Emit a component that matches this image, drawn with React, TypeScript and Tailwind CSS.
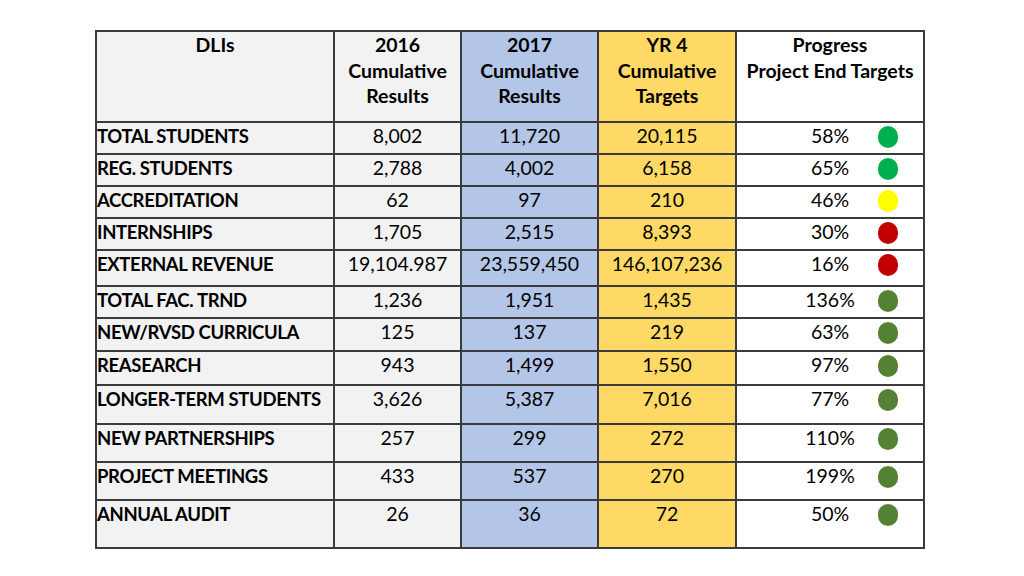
import React from "react";

type Row = {
  name: string;
  a: string;
  b: string;
  c: string;
  p: string;
  color: string;
  h: number;
};

const rows: Row[] = [
  { name: "TOTAL STUDENTS", a: "8,002", b: "11,720", c: "20,115", p: "58%", color: "#00b050", h: 32 },
  { name: "REG. STUDENTS", a: "2,788", b: "4,002", c: "6,158", p: "65%", color: "#00b050", h: 32 },
  { name: "ACCREDITATION", a: "62", b: "97", c: "210", p: "46%", color: "#ffff00", h: 32 },
  { name: "INTERNSHIPS", a: "1,705", b: "2,515", c: "8,393", p: "30%", color: "#c00000", h: 32 },
  { name: "EXTERNAL REVENUE", a: "19,104.987", b: "23,559,450", c: "146,107,236", p: "16%", color: "#c00000", h: 36 },
  { name: "TOTAL FAC. TRND", a: "1,236", b: "1,951", c: "1,435", p: "136%", color: "#548235", h: 32 },
  { name: "NEW/RVSD CURRICULA", a: "125", b: "137", c: "219", p: "63%", color: "#548235", h: 33 },
  { name: "REASEARCH", a: "943", b: "1,499", c: "1,550", p: "97%", color: "#548235", h: 34 },
  { name: "LONGER-TERM STUDENTS", a: "3,626", b: "5,387", c: "7,016", p: "77%", color: "#548235", h: 39 },
  { name: "NEW PARTNERSHIPS", a: "257", b: "299", c: "272", p: "110%", color: "#548235", h: 38 },
  { name: "PROJECT MEETINGS", a: "433", b: "537", c: "270", p: "199%", color: "#548235", h: 38 },
  { name: "ANNUAL AUDIT", a: "26", b: "36", c: "72", p: "50%", color: "#548235", h: 48 },
];

export default function App() {
  return (
    <div
      className="w-[1024px] h-[576px] bg-white overflow-hidden pt-[30px] pl-[95px] text-black"
      style={{ fontFamily: "Lato, 'Open Sans', sans-serif" }}
    >
      <table className="border-collapse table-fixed w-[828px] text-[19.5px] leading-[24px]">
        <colgroup>
          <col className="w-[238px]" />
          <col className="w-[127px]" />
          <col className="w-[137px]" />
          <col className="w-[138px]" />
          <col className="w-[188px]" />
        </colgroup>
        <thead>
          <tr className="h-[91px] font-bold leading-[25.5px]">
            <th className="border-2 border-[#3b3b3b] bg-[#f2f2f2] align-top pt-0 font-bold">DLIs</th>
            <th className="border-2 border-[#3b3b3b] bg-[#f2f2f2] align-top pt-0 font-bold">
              2016
              <br />
              Cumulative
              <br />
              Results
            </th>
            <th className="border-2 border-[#3b3b3b] bg-[#b4c6e7] align-top pt-0 font-bold">
              2017
              <br />
              Cumulative
              <br />
              Results
            </th>
            <th className="border-2 border-[#3b3b3b] bg-[#ffd966] align-top pt-0 font-bold">
              YR 4
              <br />
              Cumulative
              <br />
              Targets
            </th>
            <th className="border-2 border-[#3b3b3b] bg-white align-top pt-0 font-bold">
              Progress
              <br />
              Project End Targets
            </th>
          </tr>
        </thead>
        <tbody>
          {rows.map((r) => (
            <tr key={r.name} style={{ height: r.h }}>
              <td className="border-2 border-[#3b3b3b] bg-[#f2f2f2] align-top pt-[1px] pl-0 font-bold whitespace-nowrap text-[18.5px] tracking-[-0.35px]">
                {r.name}
              </td>
              <td className="border-2 border-[#3b3b3b] bg-[#f2f2f2] align-top pt-[1px] text-center">{r.a}</td>
              <td className="border-2 border-[#3b3b3b] bg-[#b4c6e7] align-top pt-[1px] text-center">{r.b}</td>
              <td className="border-2 border-[#3b3b3b] bg-[#ffd966] align-top pt-[1px] text-center">{r.c}</td>
              <td className="border-2 border-[#3b3b3b] bg-white align-top pt-[1px] text-center relative">
                {r.p}
                <span
                  className="absolute left-[141px] top-[3px] w-[20px] h-[22px] rounded-full"
                  style={{ backgroundColor: r.color }}
                />
              </td>
            </tr>
          ))}
        </tbody>
      </table>
    </div>
  );
}
